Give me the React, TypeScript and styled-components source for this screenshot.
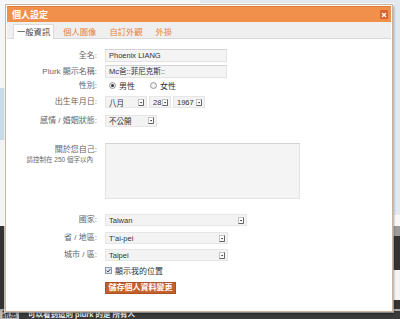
import React from "react";
import styled, { createGlobalStyle } from "styled-components";

const GlobalStyle = createGlobalStyle`
  html, body {
    margin: 0;
    padding: 0;
    background: #fff;
  }
  body {
    font-family: "Liberation Sans", "Noto Sans CJK TC", sans-serif;
  }
`;

const Page = styled.div`
  position: relative;
  width: 400px;
  height: 319px;
  overflow: hidden;
  display: flex;
  flex-direction: column;
`;

const Band = styled.div<{ $h: number; $l: string; $r: string }>`
  flex-shrink: 0;
  height: ${(p) => p.$h}px;
  background: linear-gradient(to right, ${(p) => p.$l} 0 50%, ${(p) => p.$r} 50% 100%);
`;

const Footer = styled.div`
  flex: 1;
  display: flex;
  align-items: center;
  gap: 9px;
  background: #3a3a3a;
  color: #f2f2f2;
  font-size: 7.5px;
  font-weight: bold;
  line-height: 8px;
  white-space: nowrap;
`;

const FooterTag = styled.span`
  background: #b9b9b9;
  color: #333;
  padding: 0 2px;
`;

const Dialog = styled.div`
  position: absolute;
  left: 5px;
  top: 4px;
  width: 388px;
  height: 308px;
  box-sizing: border-box;
  border: 1px solid #cdb29c;
  padding: 1px;
  background: #fff;
  box-shadow: 1px 2px 2px rgba(0, 0, 0, 0.35), 0 0 0 1px rgba(255, 255, 255, 0.7);
  display: flex;
  flex-direction: column;
`;

const TitleBar = styled.div`
  height: 16px;
  box-sizing: border-box;
  background: #f1904a;
  border-top: 1px solid #e07a36;
  display: flex;
  align-items: center;
  justify-content: space-between;
  padding: 0 3px 0 5px;
`;

const Title = styled.span`
  color: #fff;
  font-weight: bold;
  font-size: 9px;
`;

const CloseBtn = styled.div`
  width: 8px;
  height: 9px;
  background: #d5642e;
  border-radius: 1px;
  display: flex;
  align-items: center;
  justify-content: center;
`;

const TabBar = styled.div`
  height: 17px;
  box-sizing: border-box;
  background: #efefef;
  border-bottom: 1px solid #d9d9d9;
  display: flex;
  align-items: flex-end;
  padding-left: 6px;
  gap: 5px;
`;

const Tab = styled.div<{ $active?: boolean }>`
  height: 14px;
  line-height: 14px;
  padding: 0 3px;
  margin-bottom: -1px;
  font-size: 8.3px;
  color: ${(p) => (p.$active ? "#444" : "#e8823c")};
  background: ${(p) => (p.$active ? "#fff" : "transparent")};
  border: 1px solid ${(p) => (p.$active ? "#dcdcdc" : "transparent")};
  border-bottom: none;
`;

const Body = styled.div`
  padding-top: 10px;
  display: flex;
  flex-direction: column;
`;

const Row = styled.div<{ $h: number; $mt: number; $top?: boolean }>`
  display: grid;
  grid-template-columns: 90px 1fr;
  column-gap: 8px;
  align-items: ${(p) => (p.$top ? "start" : "center")};
  height: ${(p) => p.$h}px;
  margin-top: ${(p) => p.$mt}px;
`;

const Label = styled.div`
  text-align: right;
  font-size: 8px;
  line-height: 10px;
  color: #666;
  white-space: nowrap;
`;

const LabelStack = styled.div`
  padding-top: 2px;
  display: flex;
  flex-direction: column;
  align-items: flex-end;
`;

const Note = styled.div`
  font-size: 6.5px;
  line-height: 9px;
  color: #666;
  white-space: nowrap;
  padding-right: 4px;
`;

const TextBox = styled.div<{ $w: number }>`
  width: ${(p) => p.$w}px;
  height: 13px;
  box-sizing: border-box;
  background: #f4f4f4;
  border: 1px solid #e3e3e3;
  border-top-color: #d3d3d3;
  font-size: 7.5px;
  line-height: 11px;
  color: #333;
  padding: 0 3px;
  white-space: nowrap;
`;

const TextArea = styled.div`
  width: 195px;
  height: 56px;
  box-sizing: border-box;
  background: #f4f4f4;
  border: 1px solid #e3e3e3;
  border-top-color: #d3d3d3;
`;

const SelectBox = styled.div<{ $w: number }>`
  width: ${(p) => p.$w}px;
  height: 12px;
  box-sizing: border-box;
  background: #f3f3f3;
  border: 1px solid #e6e6e6;
  display: flex;
  align-items: center;
  justify-content: space-between;
  padding: 0 2px 0 3px;
  font-size: 7.5px;
  color: #333;
  white-space: nowrap;
`;

const Inline = styled.div<{ $gap: number; $pl?: number }>`
  display: flex;
  align-items: center;
  gap: ${(p) => p.$gap}px;
  padding-left: ${(p) => p.$pl ?? 0}px;
`;

const Option = styled.div`
  display: flex;
  align-items: center;
  gap: 3px;
  font-size: 8px;
  color: #333;
`;

const Radio = styled.div<{ $on?: boolean }>`
  width: 7px;
  height: 7px;
  box-sizing: border-box;
  border-radius: 50%;
  border: 1px solid #9a9a9a;
  background: radial-gradient(circle, #fff 0%, #dedede 100%);
  display: flex;
  align-items: center;
  justify-content: center;
  &::after {
    content: "";
    display: ${(p) => (p.$on ? "block" : "none")};
    width: 3px;
    height: 3px;
    border-radius: 50%;
    background: #333;
  }
`;

const Check = styled.div`
  width: 7px;
  height: 7px;
  box-sizing: border-box;
  border: 1px solid #8d99a8;
  background: #dfe5ee;
  display: flex;
  align-items: center;
  justify-content: center;
`;

const SaveButton = styled.div`
  width: 71px;
  height: 12px;
  box-sizing: border-box;
  background: #c4602c;
  border: 1px solid #ad5024;
  color: #fff;
  font-size: 8px;
  font-weight: bold;
  line-height: 10px;
  text-align: center;
  white-space: nowrap;
`;

function Arrow() {
  return (
    <svg width="6" height="7" viewBox="0 0 6 7">
      <rect x="0.5" y="0.5" width="5" height="6" fill="#fff" stroke="#c4c4c4" />
      <path d="M5.5 0.5 V6.5 H0.5" fill="none" stroke="#666" />
      <path d="M2 3 H4.2 L3.1 4.4 Z" fill="#222" />
    </svg>
  );
}

function Select({ w, value }: { w: number; value: string }) {
  return (
    <SelectBox $w={w}>
      <span>{value}</span>
      <Arrow />
    </SelectBox>
  );
}

const tabs = ["一般資訊", "個人圖像", "自訂外觀", "外掛"];

export default function App() {
  return (
    <>
      <GlobalStyle />
      <Page>
        <Band $h={88} $l="#f4f6f7" $r="#e1eaf0" />
        <Band $h={52} $l="#c8dbe9" $r="#e1eaf0" />
        <Band $h={75} $l="#f2f4f5" $r="#e1eaf0" />
        <Band $h={11} $l="#f2f4f5" $r="#f8f8f8" />
        <Band $h={10} $l="#333" $r="#9c9c9c" />
        <Band $h={34} $l="#333" $r="#333" />
        <Band $h={30} $l="#333" $r="#f4f4f4" />
        <Band $h={9} $l="#333" $r="#333" />
        <Band $h={2} $l="#a8a8a8" $r="#a8a8a8" />
        <Footer>
          <FooterTag>訊息</FooterTag>
          <span>可以看到這則 plurk 的是 所有人</span>
        </Footer>

        <Dialog>
          <TitleBar>
            <Title>個人設定</Title>
            <CloseBtn>
              <svg width="6" height="6" viewBox="0 0 6 6">
                <path d="M1 1 L5 5 M5 1 L1 5" stroke="#fff" strokeWidth="1.4" />
              </svg>
            </CloseBtn>
          </TitleBar>
          <TabBar>
            {tabs.map((t, i) => (
              <Tab key={t} $active={i === 0}>
                {t}
              </Tab>
            ))}
          </TabBar>
          <Body>
            <Row $h={13} $mt={0}>
              <Label>全名:</Label>
              <TextBox $w={122}>Phoenix LIANG</TextBox>
            </Row>
            <Row $h={13} $mt={3}>
              <Label>Plurk 顯示名稱:</Label>
              <TextBox $w={122}>Mc爸::菲尼克斯::</TextBox>
            </Row>
            <Row $h={13} $mt={1}>
              <Label>性別:</Label>
              <Inline $gap={15} $pl={4}>
                <Option>
                  <Radio $on />
                  男性
                </Option>
                <Option>
                  <Radio />
                  女性
                </Option>
              </Inline>
            </Row>
            <Row $h={12} $mt={4}>
              <Label>出生年月日:</Label>
              <Inline $gap={2}>
                <Select w={42} value="八月" />
                <Select w={22} value="28" />
                <Select w={32} value="1967" />
              </Inline>
            </Row>
            <Row $h={13} $mt={6}>
              <Label>感情 / 婚姻狀態:</Label>
              <Select w={52} value="不公開" />
            </Row>
            <Row $h={56} $mt={16} $top>
              <LabelStack>
                <Label>關於您自己:</Label>
                <Note>請控制在 250 個字以內</Note>
              </LabelStack>
              <TextArea />
            </Row>
            <Row $h={12} $mt={15}>
              <Label>國家:</Label>
              <Select w={142} value="Taiwan" />
            </Row>
            <Row $h={12} $mt={6}>
              <Label>省 / 地區:</Label>
              <Select w={123} value="T'ai-pei" />
            </Row>
            <Row $h={12} $mt={5}>
              <Label>城市 / 區:</Label>
              <Select w={123} value="Taipei" />
            </Row>
            <Row $h={10} $mt={4}>
              <span />
              <Option>
                <Check>
                  <svg width="5" height="5" viewBox="0 0 5 5">
                    <path d="M0.6 2.6 L2 4 L4.4 1" fill="none" stroke="#3d4a5c" strokeWidth="1" />
                  </svg>
                </Check>
                顯示我的位置
              </Option>
            </Row>
            <Row $h={12} $mt={7}>
              <span />
              <SaveButton>儲存個人資料變更</SaveButton>
            </Row>
          </Body>
        </Dialog>
      </Page>
    </>
  );
}
